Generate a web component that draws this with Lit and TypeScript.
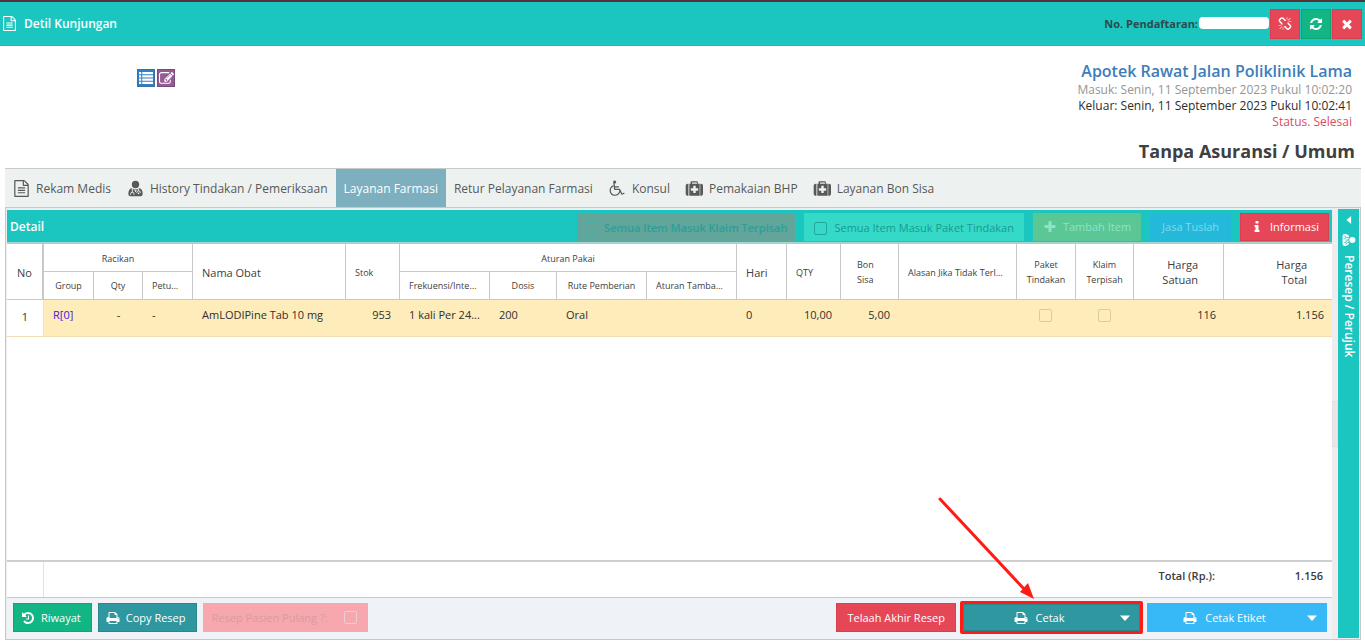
import { LitElement, html, css, svg } from "lit";
import { customElement, property } from "lit/decorators.js";
import { classMap } from "lit/directives/class-map.js";

const ICONS: Record<string, string> = {
  file: "M1596 380q28 28 48 76t20 88v1152q0 40-28 68t-68 28h-1344q-40 0-68-28t-28-68v-1600q0-40 28-68t68-28h896q40 0 88 20t76 48zm-444-244v376h376q-10-29-22-41l-313-313q-12-12-41-22zm384 1528v-1024h-416q-40 0-68-28t-28-68v-416h-768v1536h1280zm-1024-864q0-14 9-23t23-9h704q14 0 23 9t9 23v64q0 14-9 23t-23 9h-704q-14 0-23-9t-9-23v-64zm736 224q14 0 23 9t9 23v64q0 14-9 23t-23 9h-704q-14 0-23-9t-9-23v-64q0-14 9-23t23-9h704zm0 256q14 0 23 9t9 23v64q0 14-9 23t-23 9h-704q-14 0-23-9t-9-23v-64q0-14 9-23t23-9h704z",
  close: "M1490 1322q0 40-28 68l-136 136q-28 28-68 28t-68-28l-294-294-294 294q-28 28-68 28t-68-28l-136-136q-28-28-28-68t28-68l294-294-294-294q-28-28-28-68t28-68l136-136q28-28 68-28t68 28l294 294 294-294q28-28 68-28t68 28l136 136q28 28 28 68t-28 68l-294 294 294 294q28 28 28 68z",
  refresh: "M1639 1056q0 5-1 7-64 268-268 434.5t-478 166.5q-146 0-282.5-55t-243.5-157l-129 129q-19 19-45 19t-45-19-19-45v-448q0-26 19-45t45-19h448q26 0 45 19t19 45-19 45l-137 137q71 66 161 102t187 36q134 0 250-65t186-179q11-17 53-117 8-23 30-23h192q13 0 22.5 9.5t9.5 22.5zm25-800v448q0 26-19 45t-45 19h-448q-26 0-45-19t-19-45 19-45l138-138q-148-137-349-137-134 0-250 65t-186 179q-11 17-53 117-8 23-30 23h-199q-13 0-22.5-9.5t-9.5-22.5v-7q65-268 270-434.5t480-166.5q146 0 284 55.5t245 156.5l130-129q19-19 45-19t45 19 19 45z",
  unlink: "M503 1271l-256 256q-10 9-23 9-12 0-23-9-9-10-9-23t9-23l256-256q10-9 23-9t23 9q9 10 9 23t-9 23zm169 41v320q0 14-9 23t-23 9-23-9-9-23v-320q0-14 9-23t23-9 23 9 9 23zm-224-224q0 14-9 23t-23 9h-320q-14 0-23-9t-9-23 9-23 23-9h320q14 0 23 9t9 23zm1264 128q0 120-85 203l-147 146q-83 83-203 83-121 0-204-85l-334-335q-21-21-42-56l239-18 273 274q28 28 68 27.5t68-27.5l147-146q28-28 28-67 0-40-28-68l-274-275 18-239q35 21 56 42l336 336q84 86 84 204zm-617-724l-239 18-273-274q-28-28-68-28-39 0-68 27l-147 146q-28 28-28 67 0 40 28 68l274 274-18 240q-35-21-56-42l-336-336q-84-86-84-204 0-120 85-203l147-146q83-83 203-83 121 0 204 85l334 335q21 21 42 56zm633 84q0 14-9 23t-23 9h-320q-14 0-23-9t-9-23 9-23 23-9h320q14 0 23 9t9 23zm-544-544v320q0 14-9 23t-23 9-23-9-9-23v-320q0-14 9-23t23-9 23 9 9 23zm407 151l-256 256q-11 9-23 9t-23-9q-9-10-9-23t9-23l256-256q10-9 23-9t23 9q9 10 9 23t-9 23z",
  print: "M448 1536h896v-256h-896v256zm0-640h896v-384h-160q-40 0-68-28t-28-68v-160h-640v640zm1152 64q0-26-19-45t-45-19-45 19-19 45 19 45 45 19 45-19 19-45zm128 0v416q0 13-9.500 22.500t-22.500 9.500h-224v160q0 40-28 68t-68 28h-960q-40 0-68-28t-28-68v-160h-224q-13 0-22.500-9.500t-9.500-22.500v-416q0-79 56.500-135.500t135.500-56.500h64v-544q0-40 28-68t68-28h672q40 0 88 20t76 48l152 152q28 28 48 76t20 88v256h64q79 0 135.500 56.500t56.500 135.500z",
  history: "M1664 896q0 156-61 298t-164 245-245 164-298 61q-172 0-327-72.500t-264-204.500q-7-10-6.500-22.500t8.500-20.500l137-138q10-9 25-9 16 2 23 12 73 95 179 147t225 52q104 0 198.500-40.500t163.500-109.500 109.500-163.500 40.500-198.500-40.500-198.500-109.500-163.500-163.500-109.500-198.500-40.500q-98 0-188 35.500t-160 101.500l137 138q31 30 14 69-17 40-59 40h-448q-26 0-45-19t-19-45v-448q0-42 40-59 39-17 69 14l130 129q107-101 244.500-156.500t284.500-55.500q156 0 298 61t245 164 164 245 61 298zM1024 608v448q0 14-9 23t-23 9h-320q-14 0-23-9t-9-23v-64q0-14 9-23t23-9h224v-352q0-14 9-23t23-9h64q14 0 23 9t9 23z",
  edit: "M888 1184l116-116-152-152-116 116v56h96v96h56zm440-720q-16-16-33 1l-350 350q-17 17-1 33t33-1l350-350q17-17 1-33zm80 594v190q0 119-84.500 203.500t-203.500 84.500h-832q-119 0-203.500-84.500t-84.500-203.500v-832q0-119 84.500-203.500t203.500-84.500h832q63 0 117 25 15 7 18 23 3 17-9 29l-49 49q-14 14-32 8-23-6-45-6h-832q-66 0-113 47t-47 113v832q0 66 47 113t113 47h832q66 0 113-47t47-113v-126q0-13 9-22l64-64q15-15 35-7t20 29zm-96-738l288 288-672 672h-288v-288zm444 132l-92 92-288-288 92-92q28-28 68-28t68 28l152 152q28 28 28 68t-28 68z",
  wheelchair: "M1087 1067l102 204q-58 179-210 290t-339 111q-156 0-288.500-77.500t-210-210-77.500-288.500q0-181 104.500-330t274.500-211l17 131q-122 54-195 165.500t-73 244.500q0 185 131.500 316.500t316.500 131.500q126 0 232.500-65t165-175.500 49.500-236.500zm508 245l58 114-256 128q-13 7-29 7-40 0-57-35l-239-477h-472q-24 0-42.500-16.500t-21.500-40.500l-96-779q-2-17 6-42 14-51 57-82.500t97-31.500q66 0 113 47t47 113q0 69-52 117.500t-120 41.500l37 289h423v128h-407l16 128h455q40 0 57 35l228 455z",
  info: "M1216 1344v128q0 26-19 45t-45 19h-512q-26 0-45-19t-19-45v-128q0-26 19-45t45-19h64v-384h-64q-26 0-45-19t-19-45v-128q0-26 19-45t45-19h384q26 0 45 19t19 45v576h64q26 0 45 19t19 45zm-128-1152v192q0 26-19 45t-45 19h-256q-26 0-45-19t-19-45v-192q0-26 19-45t45-19h256q26 0 45 19t19 45z",
  plus: "M1600 736v192q0 40-28 68t-68 28h-416v416q0 40-28 68t-68 28h-192q-40 0-68-28t-28-68v-416h-416q-40 0-68-28t-28-68v-192q0-40 28-68t68-28h416v-416q0-40 28-68t68-28h192q40 0 68 28t28 68v416h416q40 0 68 28t28 68z",
  medkit: "M1280 1088v-192q0-14-9-23t-23-9h-224v-224q0-14-9-23t-23-9h-192q-14 0-23 9t-9 23v224h-224q-14 0-23 9t-9 23v192q0 14 9 23t23 9h224v224q0 14 9 23t23 9h192q14 0 23-9t9-23v-224h224q14 0 23-9t9-23zm-640-704h512v-128h-512v128zm-384 0v1280h-64q-92 0-158-66t-66-158v-832q0-92 66-158t158-66h64zm1184 0v1280h-1088v-1280h128v-160q0-40 28-68t68-28h576q40 0 68 28t28 68v160h128zm352 224v832q0 92-66 158t-158 66h-64v-1280h64q92 0 158 66t66 158z",
  list: "M0 128h288v288h-288zM416 128h1376v288h-1376zM0 544h288v288h-288zM416 544h1376v288h-1376zM0 960h288v288h-288zM416 960h1376v288h-1376zM0 1376h288v288h-288zM416 1376h1376v288h-1376z",
  down: "M256 576h1280l-640 704z",
  left: "M1280 192v1408l-832-704z",
};

@customElement("ui-icon")
export class UiIcon extends LitElement {
  @property() name = "";
  @property({ type: Number }) size = 14;

  static styles = css`
    :host {
      display: inline-flex;
      flex: none;
    }
    svg {
      display: block;
      fill: currentColor;
      overflow: visible;
    }
    .cut {
      fill: none;
      stroke: var(--cut, #edf2f1);
      stroke-width: 100;
    }
    .dot {
      fill: var(--cut, #edf2f1);
    }
  `;

  render() {
    const shape =
      this.name === "doctor"
        ? svg`<circle cx="896" cy="470" r="390"/>
            <path d="M500 860q-360 70-360 620 0 240 230 240h1052q230 0 230-240 0-550-360-620-180 130-396 130t-396-130z"/>
            <path class="cut" d="M560 900v400M380 1560v-120q0-140 180-140t180 140v120M1220 900v220M1040 1380v-80q0-160 180-160t180 160v80"/>
            <circle class="dot" cx="1220" cy="1400" r="90"/>
            <path class="dot" d="M760 1010l136 60 136-60-136 300z"/>`
        : svg`<path d=${ICONS[this.name] ?? ""} />`;
    return html`<svg width=${this.size} height=${this.size} viewBox="0 0 1792 1792" aria-hidden="true">${shape}</svg>`;
  }
}

const TABS = [
  { label: "Rekam Medis", icon: "file" },
  { label: "History Tindakan / Pemeriksaan", icon: "doctor" },
  { label: "Layanan Farmasi", active: true },
  { label: "Retur Pelayanan Farmasi" },
  { label: "Konsul", icon: "wheelchair" },
  { label: "Pemakaian BHP", icon: "medkit" },
  { label: "Layanan Bon Sisa", icon: "medkit" },
];

const COLUMNS = [37, 50, 49, 50, 153, 54, 90, 67, 90, 90, 50, 54, 58, 118, 59, 58, 90];

@customElement("app-root")
export class AppRoot extends LitElement {
  static styles = css`
    :host {
      display: flex;
      flex-direction: column;
      min-height: 100vh;
      box-sizing: border-box;
      padding-bottom: 4px;
      background: #fff;
      color: #404040;
      font: 11px/16px "Open Sans", sans-serif;
    }
    * {
      box-sizing: border-box;
    }
    button {
      display: inline-flex;
      align-items: center;
      justify-content: center;
      border: 1px solid transparent;
      padding: 0;
      color: #fff;
      font: inherit;
      cursor: pointer;
    }
    input {
      appearance: none;
      margin: 0;
      width: 13px;
      height: 13px;
      border: 1px solid var(--box, #1fa79c);
      border-radius: 2px;
      flex: none;
    }
    .titlebar {
      display: flex;
      align-items: center;
      gap: 7px;
      height: 46px;
      padding: 0 3px 0 2px;
      border-top: 2px solid #54323a;
      border-bottom: 1px solid #10c4ba;
      background: #1bc6c1;
    }
    .titlebar h1 {
      margin: 0;
      flex: 1;
      font-size: 12px;
      font-weight: 600;
      color: #fff;
    }
    .titlebar ui-icon {
      color: #fff;
    }
    .reg {
      display: flex;
      align-items: center;
      gap: 1px;
      color: #2b4a4c;
      font-weight: 700;
    }
    .regno {
      width: 70px;
      height: 12px;
      margin-bottom: 2px;
      border-radius: 4px;
      background: #fff;
    }
    .tools {
      display: flex;
      gap: 1px;
      margin-left: -6px;
    }
    .tools button {
      width: 30px;
      height: 30px;
    }
    .red {
      background: #e64757;
      border-color: #d9404f;
    }
    .green {
      background: #12b584;
      border-color: #0ea577;
    }
    .teal {
      background: #2e979f;
      border-color: #28868e;
    }
    .sky {
      background: #36b9f6;
      border-color: #36b9f6;
    }
    .patient {
      display: flex;
      justify-content: space-between;
      height: 122px;
      padding: 15px 10px 0 137px;
    }
    .quick {
      display: flex;
      gap: 2px;
      padding-top: 8px;
    }
    .quick button {
      width: 18px;
      height: 18px;
      background: #2f7fc2;
      border-color: #3d6fa8;
    }
    .quick .purple {
      background: #955c92;
      border-color: #7b4a7c;
    }
    .visit {
      text-align: right;
      font-size: 12px;
    }
    .visit p {
      margin: 0;
      padding-right: 3px;
    }
    .visit .unit {
      font-size: 16px;
      line-height: 21px;
      font-weight: 600;
      color: #3d7dba;
    }
    .visit .in {
      color: #959595;
    }
    .visit .out {
      color: #2d2d2d;
    }
    .visit .status {
      color: #e04a62;
    }
    .visit .payer {
      padding: 9px 0 0;
      font-size: 18px;
      line-height: 24px;
      font-weight: 700;
      color: #404040;
    }
    .tabs {
      display: flex;
      height: 40px;
      margin: 0 4px 0 5px;
      border-top: 1px solid #c8caca;
      border-bottom: 1px solid #c8c8c8;
      background: #edf2f1;
    }
    .tabs button {
      gap: 6px;
      padding: 1px 8px 0;
      border: 0;
      background: none;
      font-size: 12px;
      color: #585858;
    }
    .tabs .active {
      background: #7dafbe;
      color: #fff;
      font-weight: 500;
    }
    .panel {
      display: flex;
      flex: 1;
      margin: 0 4px 0 5px;
      padding: 0 1px;
      border: 1px solid #c8c8c8;
      border-top: 0;
      background: #eeecee;
    }
    .splitter {
      display: flex;
      align-items: center;
      width: 6px;
    }
    .splitter::before {
      content: "";
      width: 6px;
      height: 44px;
      border: 1px solid #e2e0e2;
      background: #e8e6e8;
    }
    .main {
      display: flex;
      flex-direction: column;
      flex: 1;
      min-width: 0;
      background: #fff;
    }
    .bar {
      display: flex;
      align-items: stretch;
      gap: 9px;
      height: 36px;
      padding: 3px 3px 1px;
      border-top: 2px solid #ebedef;
      border-bottom: 2px solid #a5d3cf;
      background: #1bc6c1;
    }
    .bar h2 {
      margin: 0;
      flex: 1;
      align-self: center;
      padding-bottom: 1px;
      font-size: 12px;
      font-weight: 600;
      color: #fff;
    }
    .check {
      display: flex;
      align-items: center;
      gap: 7px;
      padding: 2px 10px 0;
      background: #35d9c7;
      color: #1a9b90;
    }
    .check.off {
      --box: #45b0a9;
      gap: 6px;
      padding: 2px 8px 0;
      background: #61a59b;
      color: #2e9e99;
      font-weight: 600;
    }
    .bar button {
      gap: 6px;
      padding: 0 9px;
    }
    .add {
      background: #5ac795;
      color: #8fe3c8;
    }
    .bar .tuslah {
      padding: 0 11px;
      background: #24b9da;
      color: #7fd9ec;
    }
    table {
      width: 100%;
      table-layout: fixed;
      border-collapse: separate;
      border-spacing: 0;
    }
    th,
    td {
      padding: 0 9px;
      overflow: hidden;
      white-space: nowrap;
      text-overflow: ellipsis;
      text-align: left;
      font-weight: 400;
    }
    th {
      height: 28px;
      line-height: 15px;
      border-right: 1px solid #c8c8c8;
      border-bottom: 1px solid #c8c8c8;
    }
    th[rowspan],
    th[colspan] {
      padding-top: 2px;
    }
    th.two {
      padding-top: 0;
    }
    th:last-child,
    .last {
      border-right: 0;
    }
    thead tr + tr th:last-child {
      border-right: 1px solid #c8c8c8;
    }
    .s {
      font-size: 9px;
    }
    .c {
      text-align: center;
    }
    .r {
      text-align: right;
    }
    .no {
      border-right: 2px solid #c8c8c8;
    }
    .bon {
      padding-left: 16px;
    }
    .money {
      padding-right: 25px;
    }
    td {
      height: 37px;
      padding: 0 9px 7px;
      border-bottom: 1px solid #f0dfb4;
      background: #feecba;
      color: #303030;
    }
    td.first {
      padding: 0 0 2px;
      background: #fff;
      border-right: 1px solid #e4e4e4;
    }
    td.money,
    td.last {
      padding-right: 8px;
    }
    td.box {
      --box: #dccb9c;
      padding-right: 11px;
    }
    td a {
      color: #3a18dc;
      text-decoration: none;
    }
    td input {
      vertical-align: middle;
    }
    .space {
      flex: 1;
      border-bottom: 2px solid #cfcfcf;
    }
    .sum {
      display: flex;
      height: 36px;
      border-bottom: 1px solid #c8c8c8;
      padding-right: 9px;
      font-weight: 600;
      color: #3c3c3c;
    }
    .sum .gutter {
      flex: 1;
    }
    .sum .gutter::before {
      content: "";
      display: block;
      width: 36px;
      height: 35px;
      border-right: 1px solid #e2e2e2;
    }
    .sum span {
      padding-top: 6px;
    }
    .sum .amount {
      width: 108px;
      text-align: right;
    }
    .foot {
      display: flex;
      align-items: center;
      justify-content: space-between;
      height: 41px;
      padding: 0 5px 2px 6px;
      background: #eff2f7;
    }
    .group {
      display: flex;
      align-items: center;
      gap: 6px;
    }
    .group.end {
      gap: 4px;
    }
    .foot button {
      height: 29px;
      gap: 6px;
      padding: 0 10px 0 7px;
    }
    .foot .check {
      --box: #e9ced2;
      height: 29px;
      background: #f7a8ae;
      color: #d69da2;
      gap: 17px;
      padding: 0 11px 0 9px;
    }
    .foot .plain {
      padding: 0 10px;
    }
    .foot .wide {
      width: 180px;
      gap: 8px;
      padding: 0 24px 0 7px;
      position: relative;
    }
    .foot .wide .caret {
      position: absolute;
      right: 7px;
    }
    .marked {
      display: flex;
      position: relative;
      border: 3px solid #ff1c14;
      border-radius: 2px;
    }
    .foot .marked button {
      width: 177px;
      height: 27px;
    }
    .arrow {
      position: absolute;
      right: 104px;
      bottom: 30px;
      pointer-events: none;
    }
    .side {
      display: flex;
      flex-direction: column;
      align-items: center;
      gap: 8px;
      width: 21px;
      margin: 1px 0;
      padding: 6px 0;
      border: 0;
      background: #1bc6c1;
      color: #fff;
      justify-content: flex-start;
    }
    .side span {
      writing-mode: vertical-rl;
      font-size: 12px;
      font-weight: 600;
    }
    .side .turn {
      transform: rotate(90deg);
      --cut: #1bc6c1;
    }
  `;

  render() {
    return html`
      <header class="titlebar">
        <ui-icon name="file" size="15"></ui-icon>
        <h1>Detil Kunjungan</h1>
        <div class="reg">No. Pendaftaran:<span class="regno"></span></div>
        <div class="tools">
          <button class="red" aria-label="Putuskan"><ui-icon name="unlink"></ui-icon></button>
          <button class="green" aria-label="Muat ulang"><ui-icon name="refresh"></ui-icon></button>
          <button class="red" aria-label="Tutup"><ui-icon name="close"></ui-icon></button>
        </div>
      </header>
      <section class="patient">
        <div class="quick">
          <button aria-label="Daftar"><ui-icon name="list" size="14"></ui-icon></button>
          <button class="purple" aria-label="Ubah"><ui-icon name="edit" size="15"></ui-icon></button>
        </div>
        <div class="visit">
          <p class="unit">Apotek Rawat Jalan Poliklinik Lama</p>
          <p class="in">Masuk: Senin, 11 September 2023 Pukul 10:02:20</p>
          <p class="out">Keluar: Senin, 11 September 2023 Pukul 10:02:41</p>
          <p class="status">Status. Selesai</p>
          <p class="payer">Tanpa Asuransi / Umum</p>
        </div>
      </section>
      <nav class="tabs">
        ${TABS.map(
          (t) => html`<button class=${classMap({ active: !!t.active })}>
            ${t.icon ? html`<ui-icon name=${t.icon} size="17"></ui-icon>` : ""}${t.label}
          </button>`
        )}
      </nav>
      <section class="panel">
        <div class="main">
          <div class="bar">
            <h2>Detail</h2>
            <label class="check off"><input type="checkbox" disabled />Semua Item Masuk Klaim Terpisah</label>
            <label class="check"><input type="checkbox" disabled />Semua Item Masuk Paket Tindakan</label>
            <button class="add" disabled><ui-icon name="plus"></ui-icon>Tambah Item</button>
            <button class="tuslah" disabled>Jasa Tuslah</button>
            <button class="red"><ui-icon name="info"></ui-icon>Informasi</button>
          </div>
          <table>
            <colgroup>
              ${COLUMNS.map((w) => html`<col style="width:${w}px" />`)}
              <col />
            </colgroup>
            <thead>
              <tr>
                <th class="no c" rowspan="2">No</th>
                <th class="s c" colspan="3">Racikan</th>
                <th rowspan="2">Nama Obat</th>
                <th class="s" rowspan="2">Stok</th>
                <th class="s c" colspan="4">Aturan Pakai</th>
                <th rowspan="2">Hari</th>
                <th class="s" rowspan="2">QTY</th>
                <th class="s bon two" rowspan="2">Bon<br />Sisa</th>
                <th class="s" rowspan="2">Alasan Jika Tidak Terlayani</th>
                <th class="s c two" rowspan="2">Paket<br />Tindakan</th>
                <th class="s c two" rowspan="2">Klaim<br />Terpisah</th>
                <th class="r money two" rowspan="2">Harga<br />Satuan</th>
                <th class="r money two" rowspan="2">Harga<br />Total</th>
              </tr>
              <tr>
                <th class="s c">Group</th>
                <th class="s c">Qty</th>
                <th class="s">Petunjuk</th>
                <th class="s">Frekuensi/Interval</th>
                <th class="s c">Dosis</th>
                <th class="s c">Rute Pemberian</th>
                <th class="s">Aturan Tambahan</th>
              </tr>
            </thead>
            <tbody>
              <tr>
                <td class="first c">1</td>
                <td><a href="#racikan">R[0]</a></td>
                <td class="c">-</td>
                <td>-</td>
                <td>AmLODIPine Tab 10 mg</td>
                <td class="r">953</td>
                <td>1 kali Per 24...</td>
                <td>200</td>
                <td>Oral</td>
                <td></td>
                <td>0</td>
                <td class="r">10,00</td>
                <td class="r">5,00</td>
                <td></td>
                <td class="c box"><input type="checkbox" disabled aria-label="Paket Tindakan" /></td>
                <td class="c box"><input type="checkbox" disabled aria-label="Klaim Terpisah" /></td>
                <td class="r money">116</td>
                <td class="r last">1.156</td>
              </tr>
            </tbody>
          </table>
          <div class="space"></div>
          <div class="sum">
            <div class="gutter"></div>
            <span>Total (Rp.):</span><span class="amount">1.156</span>
          </div>
          <footer class="foot">
            <div class="group">
              <button class="green"><ui-icon name="history"></ui-icon>Riwayat</button>
              <button class="teal"><ui-icon name="print"></ui-icon>Copy Resep</button>
              <label class="check">Resep Pasien Pulang ?:<input type="checkbox" disabled /></label>
            </div>
            <div class="group end">
              <button class="red plain">Telaah Akhir Resep</button>
              <div class="marked">
                <button class="teal wide">
                  <ui-icon name="print"></ui-icon>Cetak<ui-icon class="caret" name="down"></ui-icon>
                </button>
                <svg class="arrow" width="100" height="106" viewBox="0 0 100 106" aria-hidden="true">
                  <path d="M4 4L89 95" stroke="#ff1c14" stroke-width="3" stroke-linecap="round" />
                  <path d="M98 104L84 97L92 88Z" fill="#ff1c14" />
                </svg>
              </div>
              <button class="sky wide">
                <ui-icon name="print"></ui-icon>Cetak Etiket<ui-icon class="caret" name="down"></ui-icon>
              </button>
            </div>
          </footer>
        </div>
        <div class="splitter"></div>
        <button class="side">
          <ui-icon name="left" size="10"></ui-icon>
          <ui-icon class="turn" name="doctor" size="14"></ui-icon>
          <span>Peresep / Perujuk</span>
        </button>
      </section>
    `;
  }
}
